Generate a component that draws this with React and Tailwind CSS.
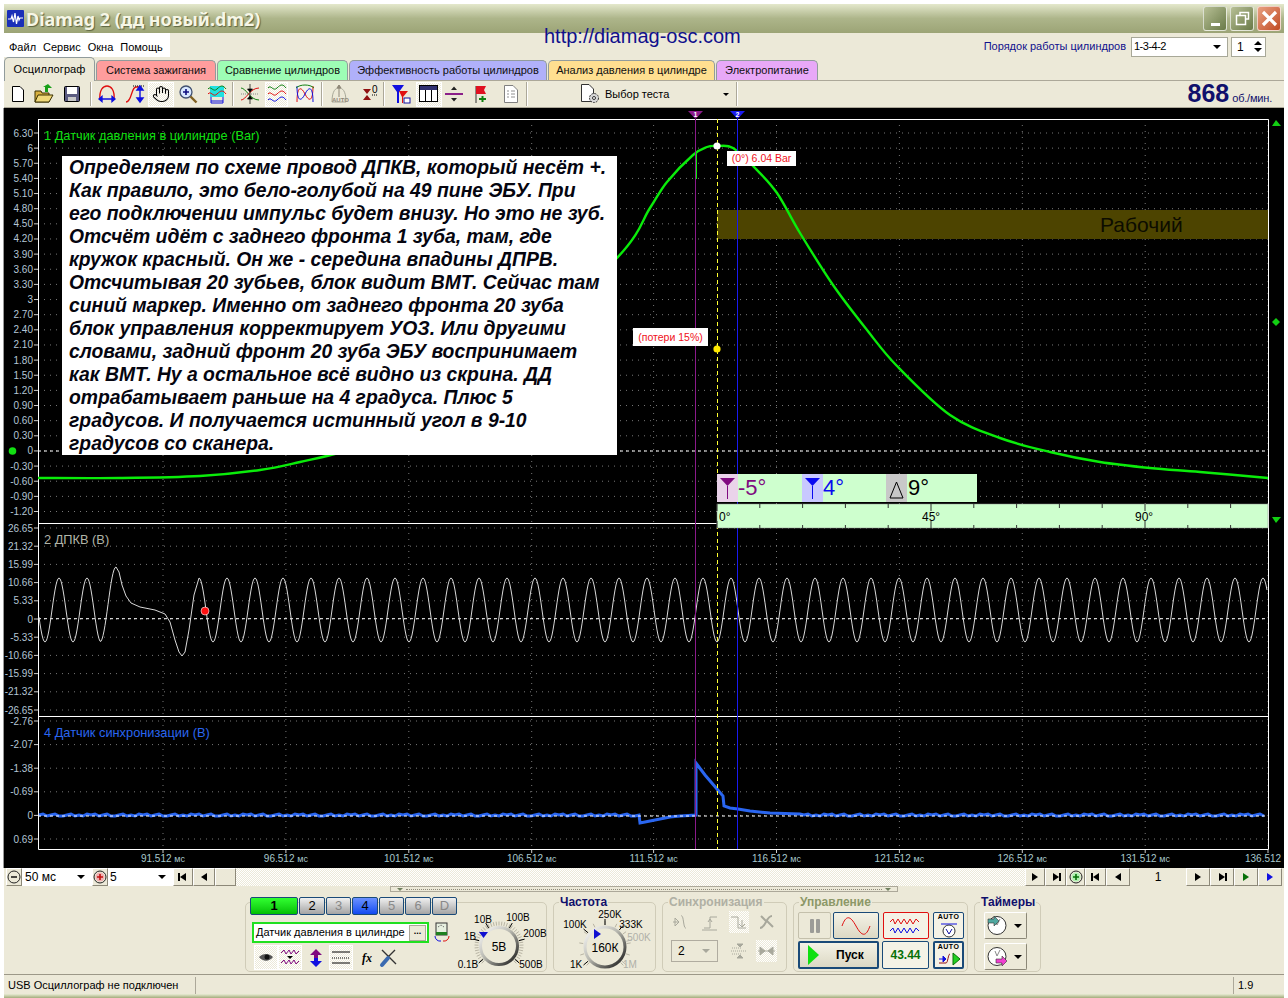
import React from 'react';
import { Hand } from 'lucide-react';

const NOTE_LINES = [
  'Определяем по схеме провод ДПКВ, который несёт +.',
  'Как правило, это бело-голубой на 49 пине ЭБУ. При',
  'его подключении импульс будет внизу. Но это не зуб.',
  'Отсчёт идёт с заднего фронта 1 зуба, там, где',
  'кружок красный. Он же - середина впадины ДПРВ.',
  'Отсчитывая 20 зубьев, блок видит ВМТ. Сейчас там',
  'синий маркер. Именно от заднего фронта 20 зуба',
  'блок управления корректирует УОЗ. Или другими',
  'словами, задний фронт 20 зуба ЭБУ воспринимает',
  'как ВМТ. Ну а остальное всё видно из скрина. ДД',
  'отрабатывает раньше на 4 градуса. Плюс 5',
  'градусов. И получается истинный угол в 9-10',
  'градусов со сканера.',
];

const TIME_X = [163, 285.9, 408.8, 531.7, 653.6, 776.5, 899.4, 1022.3, 1145.2, 1268];
const TIME_LABELS = ['91.512', '96.512', '101.512', '106.512', '111.512', '116.512', '121.512', '126.512', '131.512', '136.512'];

const P1 = ['6.30', '6', '5.70', '5.40', '5.10', '4.80', '4.50', '4.20', '3.90', '3.60', '3.30', '3', '2.70', '2.40', '2.10', '1.80', '1.50', '1.20', '0.90', '0.60', '0.30', '0', '-0.30', '-0.60', '-0.90', '-1.20']
  .map((t, i) => ({ t, y: 133 + i * 15.14 }));
const P2 = ['26.65', '21.32', '15.99', '10.66', '5.33', '0', '-5.33', '-10.66', '-15.99', '-21.32', '-26.65']
  .map((t, i) => ({ t, y: 528 + i * 18.2 }));
const P3 = ['-2.76', '-2.07', '-1.38', '-0.69', '0', '0.69']
  .map((t, i) => ({ t, y: 721 + i * 23.6 }));

const smooth = (pts) => {
  let d = `M${pts[0][0]} ${pts[0][1]}`;
  for (let i = 0; i < pts.length - 1; i++) {
    const p0 = pts[i - 1] || pts[i];
    const p1 = pts[i];
    const p2 = pts[i + 1];
    const p3 = pts[i + 2] || p2;
    d += ` C${p1[0] + (p2[0] - p0[0]) / 6} ${p1[1] + (p2[1] - p0[1]) / 6} ${p2[0] - (p3[0] - p1[0]) / 6} ${p2[1] - (p3[1] - p1[1]) / 6} ${p2[0]} ${p2[1]}`;
  }
  return d;
};

const pressure = smooth([
  [38, 478], [120, 478], [200, 476], [260, 470], [300, 462], [345, 451], [400, 430], [500, 370], [617, 258],
  [650, 208], [667, 182], [693, 155], [707, 147], [717, 146], [733, 148], [755, 168], [777, 193], [800, 233],
  [833, 285], [867, 330], [897, 366], [950, 415], [1000, 438], [1050, 452], [1100, 462], [1150, 468], [1200, 472], [1268, 478],
]);

const crankPath = () => {
  const pts = [];
  for (let x = 39; x <= 100; x++) pts.push([x, 610 - 32 * Math.cos((2 * Math.PI * (x - 59)) / 28)]);
  for (let x = 101; x <= 116; x++) pts.push([x, 604.5 - 37.5 * Math.cos((Math.PI * (x - 116)) / 16)]);
  const tail = [[119, 572], [122, 585], [126, 596], [131, 603], [140, 607], [155, 610], [165, 614], [170, 622], [175, 640], [179, 652], [182, 656], [185, 652], [189, 630], [194, 595]];
  pts.push(...tail);
  for (let x = 199; x <= 1267; x++) pts.push([x, 610 - 32 * Math.cos((2 * Math.PI * (x - 199)) / 28)]);
  return pts.map((p) => p.join(',')).join(' ');
};

const syncPath = () => {
  const jitter = [0, -1, 1, 0, -1, 1, 1, 0, -1, 1, 0, 1, -1];
  const pts = [];
  let n = 0;
  for (let x = 39; x < 639; x += 4) pts.push([x, 815 + jitter[n++ % 13]]);
  pts.push([639, 815], [640, 823], [645, 822], [650, 821], [660, 819], [670, 817], [680, 816], [696, 815], [696, 763], [705, 775], [717, 789], [723, 796], [724, 806], [730, 808], [738, 809], [750, 811], [770, 813], [800, 814]);
  for (let x = 804; x < 1268; x += 4) pts.push([x, 815 + jitter[n++ % 13]]);
  return pts.map((p) => p.join(',')).join(' ');
};

const Scope = () => (
  <div className="relative w-[1280px] h-[760px] bg-black shrink-0 shadow-[-1px_0_0_#999]">
    <svg width="1280" height="760" viewBox="4 108 1280 760" className="block" fontFamily="'Liberation Sans', sans-serif">
      {/* grid */}
      {[...P1, ...P2, ...P3].map((r, i) => (
        <line key={i} x1="38" x2="1268" y1={r.y} y2={r.y} stroke="#777" strokeDasharray="1 5" />
      ))}
      {TIME_X.map((x) => (
        <line key={x} x1={x} x2={x} y1="119" y2="849" stroke="#777" strokeDasharray="1 5" />
      ))}
      {/* zero lines */}
      <line x1="38" x2="1268" y1="451" y2="451" stroke="#fff" strokeDasharray="3 3" />
      <line x1="38" x2="1268" y1="618.7" y2="618.7" stroke="#fff" strokeDasharray="3 3" />
      {/* frame */}
      <path d="M38 119.5H1268.5V849.5H38.5V119.5M38 523.5H1268M38 716.5H1268" fill="none" stroke="#fff" />
      {/* axis */}
      {[...P1, ...P2, ...P3].map((r) => (
        <g key={r.t + r.y}>
          <line x1="34" x2="38" y1={r.y} y2={r.y} stroke="#ccc" />
          <text x="33" y={r.y + 3.5} textAnchor="end" fontSize="10" fill="#b4c6d6">{r.t}</text>
        </g>
      ))}
      {TIME_X.map((x, i) => (
        <g key={x}>
          <line x1={x} x2={x} y1="850" y2="853" stroke="#ccc" />
          <text x={i === 9 ? 1245 : x} y="862" textAnchor={i === 9 ? 'start' : 'middle'} fontSize="10" fill="#a8c8cc">{TIME_LABELS[i]} <tspan fontSize="9">мс</tspan></text>
        </g>
      ))}
      {/* working band */}
      <rect x="717" y="210" width="551" height="29" fill="#4d4400" />
      <text x="1100" y="232" fontSize="21" fill="#0c0c00">Рабочий</text>
      {/* traces */}
      <path d={pressure} fill="none" stroke="#0aec0a" strokeWidth="2.4" />
      <path d="M696 152V179" stroke="#0aec0a" strokeWidth="2" />
      <polyline points={crankPath()} fill="none" stroke="#d8d8d8" />
      <polyline points={syncPath()} fill="none" stroke="#2a66f0" strokeWidth="3" />
      <line x1="38" x2="1268" y1="816" y2="816" stroke="#fff" strokeDasharray="3 3" />
      {/* cursors */}
      <line x1="695.5" x2="695.5" y1="119" y2="849" stroke="#8a1a8a" />
      <line x1="737.5" x2="737.5" y1="119" y2="849" stroke="#1a1af0" />
      <line x1="717.5" x2="717.5" y1="119" y2="849" stroke="#ffff30" strokeDasharray="4 3" />
      <path d="M688 111H703L695.5 119Z" fill="#8a1a8a" />
      <text x="695.5" y="117" textAnchor="middle" fontSize="7" fontWeight="700" fill="#fff">1</text>
      <path d="M730 111H745L737.5 119Z" fill="#1a1af0" />
      <text x="737.5" y="117" textAnchor="middle" fontSize="7" fontWeight="700" fill="#fff">2</text>
      {/* dots */}
      <circle cx="717" cy="146" r="3.6" fill="#fff" />
      <circle cx="717" cy="349" r="3.6" fill="#ffe800" />
      <circle cx="205" cy="611" r="4" fill="#ff1010" stroke="#fff" strokeWidth="0.6" />
      <circle cx="12.5" cy="451" r="3.8" fill="#12e012" />
      {/* side arrows */}
      <path d="M1272 126L1276 120L1281 126Z" fill="#12d012" />
      <path d="M1276 318L1280 322L1276 326L1272 322Z" fill="#12d012" />
      <path d="M1272 517H1281L1276 523Z" fill="#12d012" />
      {/* degree bar */}
      <rect x="717" y="474" width="260" height="28" fill="#ceffce" />
      <rect x="717" y="474" width="21" height="28" fill="#ead3ea" />
      <path d="M720 478H735L727.5 486Z M727 486H728V499H727Z" fill="#800a80" />
      <text x="738" y="495" fontSize="22" fill="#800a80">-5°</text>
      <rect x="802" y="474" width="21" height="28" fill="#c8c8ff" />
      <path d="M805 478H820L812.5 486Z M812 486H813V499H812Z" fill="#0a0af0" />
      <text x="823" y="495" fontSize="22" fill="#0a0af0">4°</text>
      <rect x="886" y="474" width="21" height="28" fill="#c8c8c8" />
      <path d="M890 498L896.5 482L903 498Z" fill="none" stroke="#000" />
      <text x="908" y="495" fontSize="22" fill="#000">9°</text>
      <rect x="717" y="504" width="551" height="24" fill="#ceffce" stroke="#888" strokeWidth="0.5" />
      {Array.from({ length: 13 }, (_, i) => 717 + i * 42.8).map((x, i) => (
        <g key={x}>
          <line x1={x} x2={x} y1="504" y2={i % 5 === 0 ? 511 : 508} stroke="#333" />
          <line x1={x} x2={x} y1={i % 5 === 0 ? 521 : 525} y2="528" stroke="#333" />
        </g>
      ))}
      <text x="719" y="521" fontSize="12" fill="#000">0°</text>
      <text x="922" y="521" fontSize="12" fill="#000">45°</text>
      <text x="1135" y="521" fontSize="12" fill="#000">90°</text>
      {/* channel titles */}
      <text x="44" y="140" fontSize="12.8" fill="#10e010">1 Датчик давления в цилиндре (Bar)</text>
      <text x="44" y="544" fontSize="12.8" fill="#b0b4a8">2 ДПКВ (В)</text>
      <text x="44" y="737" fontSize="12.8" fill="#2a66f0">4 Датчик синхронизации (В)</text>
    </svg>
    {/* value labels over the chart */}
    <div className="absolute left-[723px] top-[43px] h-[15px] w-[69px] bg-white text-[10.5px] leading-[15px] text-center text-[#f01020] whitespace-nowrap">(0°) 6.04 Bar</div>
    <div className="absolute left-[629px] top-[220px] h-[18px] w-[75px] bg-white text-[10.5px] leading-[18px] text-center text-[#f01020] whitespace-nowrap">(потери 15%)</div>
    {/* note pasted over the picture */}
    <div className="absolute left-[58px] top-[48px] w-[555px] h-[299px] bg-white pl-[7px] text-[19.35px] leading-[23px] font-bold italic text-[#05050f] whitespace-nowrap">
      {NOTE_LINES.map((l) => <div key={l}>{l}</div>)}
    </div>
  </div>
);

const TitleBar = () => (
  <div className="h-[29px] shrink-0 flex items-center pl-[3px] pr-[3px] bg-gradient-to-b from-[#e4e8cc] via-[#adb58a] to-[#9ca476]">
    <svg width="17" height="17" viewBox="0 0 17 17" className="shrink-0">
      <rect width="17" height="17" rx="1" fill="#1a2fb8" />
      <path d="M1 9H4L5 6L6.500 12L8 3L9.500 14L11 6L12 10L13 8H16" fill="none" stroke="#fff" strokeWidth="1.2" />
    </svg>
    <span className="ml-[2px] text-[18px] leading-none font-bold text-[#f6f6e6] whitespace-nowrap [font-family:'Noto_Sans',sans-serif] [text-shadow:1px_1px_1px_#5c6440]">Diamag 2 (дд новый.dm2)</span>
    <div className="ml-auto flex gap-[3px]">
      <div className="w-[24px] h-[25px] rounded-[3px] border border-white/70 bg-gradient-to-br from-[#b8c096] to-[#6a7a48] flex items-end justify-center pb-[4px]">
        <div className="w-[9px] h-[3px] bg-white" />
      </div>
      <div className="w-[24px] h-[25px] rounded-[3px] border border-white/70 bg-gradient-to-br from-[#b8c096] to-[#6a7a48] flex items-center justify-center">
        <svg width="15" height="15" viewBox="0 0 15 15"><path d="M5 4V1.500H13.500V8H10.500M1.500 4.500H10.500V13.500H1.500Z" fill="none" stroke="#fff" strokeWidth="1.5" /></svg>
      </div>
      <div className="w-[24px] h-[25px] rounded-[3px] border border-white/70 bg-gradient-to-br from-[#e8a080] to-[#c04a20] flex items-center justify-center">
        <svg width="17" height="17" viewBox="0 0 17 17"><path d="M2 2L15 15M15 2L2 15" stroke="#fff" strokeWidth="3.2" /></svg>
      </div>
    </div>
  </div>
);

const MenuRow = () => (
  <div className="relative h-[25px] shrink-0 flex bg-[#ece9d8]">
    <div className="w-[166px] h-[24px] bg-white flex items-center gap-[7px] pl-[5px] pt-[4px] text-[11px] text-black">
      <span>Файл</span><span>Сервис</span><span>Окна</span><span>Помощь</span>
    </div>
    <div className="absolute left-[540px] -top-[8px] text-[20px] leading-[23px] text-[#10108c] whitespace-nowrap">http://diamag-osc.com</div>
    <div className="ml-auto flex items-center pt-[2px] pr-[18px]">
      <span className="text-[11px] text-[#10108c] mr-[5px]">Порядок работы цилиндров</span>
      <div className="w-[97px] h-[20px] bg-white border border-[#a8a898] flex items-center pl-[2px] text-[11px] tracking-[-0.5px]">
        1-3-4-2
        <span className="ml-auto mr-[6px] w-0 h-0 border-x-[4px] border-x-transparent border-t-[4px] border-t-black" />
      </div>
      <div className="ml-[3px] w-[35px] h-[20px] bg-white border border-[#a8a898] flex items-center pl-[5px] text-[12px]">
        1
        <span className="ml-auto mr-[3px] flex flex-col gap-[3px]">
          <span className="w-0 h-0 border-x-[4px] border-x-transparent border-b-[4px] border-b-black" />
          <span className="w-0 h-0 border-x-[4px] border-x-transparent border-t-[4px] border-t-black" />
        </span>
      </div>
    </div>
  </div>
);

const Tabs = () => {
  const tabs = [
    ['Система зажигания', 'w-[120px] bg-[#ff9d9d]'],
    ['Сравнение цилиндров', 'w-[131px] bg-[#9dfdb5]'],
    ['Эффективность работы цилиндров', 'w-[198px] bg-[#b0b0fa]'],
    ['Анализ давления в цилиндре', 'w-[167px] bg-[#ffdf90]'],
    ['Электропитание', 'w-[102px] bg-[#e8a8f8]'],
  ];
  return (
    <div className="h-[23px] shrink-0 flex items-end gap-[1px] bg-[#ece9d8] border-b border-[#aca899]">
      <div className="relative -mb-px w-[91px] h-[24px] rounded-t-[5px] border border-b-0 border-[#919b9c] bg-[#ece9d8] flex items-center justify-center text-[11px] tracking-[0.1px]">Осциллограф</div>
      {tabs.map(([t, c]) => (
        <div key={t} className={`${c} h-[20px] rounded-t-[5px] border border-b-0 border-[#919b9c] flex items-center justify-center text-[11px] text-[#101010] whitespace-nowrap`}>{t}</div>
      ))}
    </div>
  );
};

const Cell = ({ w, on, light, children }) => (
  <div
    className={`h-[25px] shrink-0 flex items-center justify-center ${on ? 'border border-white bg-[repeating-conic-gradient(#ece9d8_0_25%,#fff_0_50%)] [background-size:2px_2px]' : ''} ${light ? 'bg-[#f4f3ea]' : ''}`}
    style={{ width: w }}
  >
    {children}
  </div>
);

const Sep = () => <div className="w-[2px] h-[24px] shrink-0 bg-[#aca899] border-r border-white" />;

const Ico = ({ children, w = 20, h = 20 }) => (
  <svg width={w} height={h} viewBox={`0 0 ${w} ${h}`} fill="none">{children}</svg>
);

const Toolbar = () => (
  <div className="h-[27px] shrink-0 flex items-center pl-[2px] bg-[#ece9d8] border-b border-[#aca899]">
    <Cell w={24}><Ico w={12} h={16}><path d="M.5.500H8L11.500 4V15.500H.5Z" fill="#fff" stroke="#000" /></Ico></Cell>
    <Cell w={28}><Ico><path d="M1 18V7H7L8 9H15V18Z" fill="#d8b040" stroke="#3a3000" /><path d="M1 18L4 11H19L15 18Z" fill="#f0d878" stroke="#3a3000" /><path d="M11 8V3H9L14 0L18 4H14V8Z" fill="#18a018" /></Ico></Cell>
    <Cell w={28}><Ico w={16} h={16}><rect x=".5" y=".5" width="15" height="15" rx="1" fill="#5a5a80" stroke="#000" /><rect x="3" y="1" width="10" height="7" fill="#fff" /><rect x="4" y="11" width="8" height="4" fill="#c8c8c8" /></Ico></Cell>
    <div className="w-[4px]" /><Sep />
    <Cell w={30}><Ico><path d="M3 16C2 6 6 2 10 2S18 6 17 16" stroke="#e01010" strokeWidth="1.4" /><path d="M2 15H18M2 15L5 12.500V17.500ZM18 15L15 12.500V17.500Z" stroke="#1010e0" strokeWidth="1.3" fill="#1010e0" /></Ico></Cell>
    <Cell w={25}><Ico><path d="M1 18C7 18 6 3 11 3H14" stroke="#e01010" strokeWidth="1.3" /><path d="M8 2H19" stroke="#000" strokeDasharray="1 1" /><path d="M15 3V17M15 2L12 6H18ZM15 18L12 14H18Z" stroke="#1010e0" strokeWidth="1.4" fill="#1010e0" /></Ico></Cell>
    <div className="w-[1px]" />
    <Cell w={26} on><Hand size={18} strokeWidth={1.4} color="#000" /></Cell>
    <Cell w={27}><Ico><circle cx="8" cy="8" r="6" fill="#d8e8ff" stroke="#405070" strokeWidth="1.3" /><path d="M5 8H11M8 5V11" stroke="#101080" strokeWidth="1.6" /><path d="M12.500 12.500L18.500 18.500" stroke="#806020" strokeWidth="2.4" /></Ico></Cell>
    <Cell w={31}><Ico><rect x="3" y="2" width="14" height="11" fill="#20e0e0" /><path d="M1 5C4 1 6 9 10 5S16 1 19 5" stroke="#108010" /><path d="M1 10C4 6 6 14 10 10S16 6 19 10" stroke="#e01010" /><path d="M4 13V19H16V13M4 17H16" stroke="#1010e0" /></Ico></Cell>
    <Sep />
    <Cell w={31}><Ico><path d="M1 4C6 4 10 16 19 16" stroke="#108010" /><path d="M1 16C6 16 10 4 19 4" stroke="#e01010" /><path d="M1 10H19" stroke="#888" strokeDasharray="1 1" /><path d="M10 0V20M10 8L7.500 5H12.500ZM10 12L7.500 15H12.500Z" stroke="#000" fill="#000" strokeWidth=".7" /></Ico></Cell>
    <Cell w={23} on><Ico><path d="M1 4C4 0 6 8 10 4S16 0 19 4" stroke="#108010" /><path d="M1 10C4 6 6 14 10 10S16 6 19 10" stroke="#e01010" /><path d="M1 16C4 12 6 20 10 16S16 12 19 16" stroke="#1010e0" /></Ico></Cell>
    <Cell w={33} light><Ico><path d="M2 18C2 2 6 2 10 10S18 18 18 2" stroke="#e01010" /><path d="M2 2C2 18 6 18 10 10S18 2 18 18" stroke="#1010e0" /><path d="M1 4C5 0 15 0 19 4" stroke="#108010" /></Ico></Cell>
    <Sep />
    <Cell w={32}><Ico><path d="M3 18C3 6 7 4 10 4S17 6 17 18Z" stroke="#a8a898" fill="#ece9d8" /><path d="M10 1V13M10 1L8 4H12Z" stroke="#908878" fill="#908878" /><text x="3" y="18" fontSize="6" fontWeight="700" fill="#908878" fontFamily="'Liberation Sans', sans-serif">AUTO</text></Ico></Cell>
    <Cell w={28}><Ico><path d="M4 5H12L8 10ZM4 16H12L8 11Z" fill="#901010" /><text x="13" y="9" fontSize="10" fill="#000" fontFamily="'Liberation Sans', sans-serif">0</text><path d="M13 11H19" stroke="#000" strokeDasharray="1 1" /></Ico></Cell>
    <Sep />
    <Cell w={31}><Ico><path d="M1 1H13L8 8V19H6V8Z" fill="#1010e0" /><path d="M8 7H17L12 13V19H11V13Z" fill="#e01010" /><rect x="13" y="14" width="6" height="5" fill="#fff" stroke="#1010a0" /></Ico></Cell>
    <Cell w={26} on><Ico><rect x=".5" y="1.500" width="18" height="16" fill="#fff" stroke="#000" /><rect x="1" y="2" width="17" height="4" fill="#303070" /><path d="M6.500 6V17M12.500 6V17" stroke="#000" /></Ico></Cell>
    <Cell w={24}><Ico><path d="M1 10H19" stroke="#800a80" strokeWidth="1.8" /><path d="M7 6H13L10 2.500ZM7 14H13L10 17.500Z" fill="#222" /></Ico></Cell>
    <Cell w={30}><Ico w={14}><path d="M2 19V2" stroke="#333" /><path d="M2 2H12L10 6L12 10H2Z" fill="#e01020" /><path d="M5 15H12M8.500 12V18" stroke="#108010" strokeWidth="2" /></Ico></Cell>
    <Cell w={30}><Ico w={14} h={18}><path d="M.5.500H9L13.500 5V17.500H.5Z" fill="#fff" stroke="#808080" /><path d="M3 6H5M3 9H5M3 12H5M7 6H11M7 9H11M7 12H11" stroke="#909090" /></Ico></Cell>
    <Sep />
    <div className="w-[208px] flex items-center pl-[52px] pr-[7px] text-[11px]">
      <Ico w={21}><path d="M1.500.5H9L13.500 5V17.500H1.500Z" fill="#fff" stroke="#333" /><circle cx="14" cy="14" r="4.500" fill="#d8d8d8" stroke="#333" strokeDasharray="2 1" /><circle cx="14" cy="14" r="1.500" fill="#fff" stroke="#333" /></Ico>
      <span className="ml-[4px] mt-[1px] whitespace-nowrap">Выбор теста</span>
      <span className="ml-auto w-0 h-0 border-x-[3px] border-x-transparent border-t-[3px] border-t-black" />
    </div>
    <Sep />
    <div className="ml-auto flex items-baseline pr-[12px] text-[#10106c]">
      <span className="text-[25px] leading-none font-bold">868</span>
      <span className="ml-[3px] text-[11px] tracking-[-0.2px]">об./мин.</span>
    </div>
  </div>
);

const Btn = ({ w, children, className = '' }) => (
  <div
    className={`h-[18px] shrink-0 flex items-center justify-center bg-[#ece9d8] border border-white border-r-[#8c8878] border-b-[#8c8878] ${className}`}
    style={{ width: w }}
  >
    {children}
  </div>
);

const Tri = ({ dir = 'r', c = 'black', bar }) => (
  <svg width="10" height="10" viewBox="0 0 10 10">
    {dir === 'r' ? <path d="M2 1L8 5L2 9Z" fill={c} /> : <path d="M8 1L2 5L8 9Z" fill={c} />}
    {bar === 'l' && <rect x="0" y="1" width="2" height="8" fill={c} />}
    {bar === 'r' && <rect x="8" y="1" width="2" height="8" fill={c} />}
  </svg>
);

const RoundBtn = ({ fill, glyph }) => (
  <svg width="14" height="14" viewBox="0 0 14 14">
    <circle cx="7" cy="7" r="6" fill="none" stroke="#222" />
    <circle cx="7" cy="7" r="4.500" fill={fill} />
    {glyph}
  </svg>
);

const ScrollRow = () => (
  <div className="h-[18px] shrink-0 flex bg-[#ece9d8] pr-[2px]">
    <Btn w={16} className="ml-[2px]"><RoundBtn fill="#ece9d8" glyph={<path d="M4 7H10" stroke="#000" strokeWidth="1.4" />} /></Btn>
    <div className="w-[70px] h-[18px] bg-white flex items-center pl-[3px] text-[12px]">
      50 мс<span className="ml-auto mr-[7px] w-0 h-0 border-x-[4px] border-x-transparent border-t-[4px] border-t-black" />
    </div>
    <Btn w={16} ><RoundBtn fill="#f0b0b0" glyph={<path d="M4 7H10M7 4V10" stroke="#c01010" strokeWidth="1.6" />} /></Btn>
    <div className="w-[65px] h-[18px] bg-white flex items-center pl-[2px] text-[12px]">
      5<span className="ml-auto mr-[7px] w-0 h-0 border-x-[4px] border-x-transparent border-t-[4px] border-t-black" />
    </div>
    <Btn w={20}><Tri dir="l" bar="l" /></Btn>
    <Btn w={22}><Tri dir="l" /></Btn>
    <Btn w={21} />
    <div className="flex-1 bg-[repeating-conic-gradient(#ece9d8_0_25%,#fff_0_50%)] [background-size:2px_2px]" />
    <Btn w={20}><Tri /></Btn>
    <Btn w={21}><Tri bar="r" /></Btn>
    <Btn w={19}><RoundBtn fill="#b0f0b0" glyph={<path d="M4 7H10M7 4V10" stroke="#087008" strokeWidth="1.6" />} /></Btn>
    <Btn w={21}><Tri dir="l" bar="l" /></Btn>
    <Btn w={24}><Tri dir="l" /></Btn>
    <div className="w-[56px] h-[18px] flex items-center justify-center text-[12px]">1</div>
    <Btn w={24}><Tri /></Btn>
    <Btn w={24}><Tri bar="r" /></Btn>
    <Btn w={24}><Tri c="#087008" /></Btn>
    <Btn w={24}><Tri c="#1010e0" /></Btn>
  </div>
);

const polar = (cx, cy, r, deg) => {
  const a = ((deg - 90) * Math.PI) / 180;
  return [cx + r * Math.cos(a), cy + r * Math.sin(a)];
};

const Knob = ({ w, h, cx, cy, r, value, labels, marker, step = 6.75 }) => (
  <svg width={w} height={h} viewBox={`0 0 ${w} ${h}`} fontFamily="'Liberation Sans', sans-serif" className="shrink-0">
    <defs>
      <linearGradient id={`kn${value}`} x1="0" y1="0" x2="1" y2="1">
        <stop offset="0" stopColor="#fff" />
        <stop offset="0.45" stopColor="#b8b8b0" />
        <stop offset="1" stopColor="#111" />
      </linearGradient>
    </defs>
    {Array.from({ length: Math.floor(270 / step) + 1 }, (_, i) => -135 + i * step).map((d) => {
      const a = polar(cx, cy, r + 2, d);
      const b = polar(cx, cy, r + 6, d);
      return <line key={d} x1={a[0]} y1={a[1]} x2={b[0]} y2={b[1]} stroke="#b8b4a4" />;
    })}
    {labels.map((l) => {
      const a = polar(cx, cy, r + 2, l.deg);
      const b = polar(cx, cy, r + 8, l.deg);
      return (
        <g key={l.t}>
          <line x1={a[0]} y1={a[1]} x2={b[0]} y2={b[1]} stroke={l.off ? '#b8b8b0' : '#000'} />
          <text x={l.x} y={l.y} fontSize="10" textAnchor="middle" fill={l.off ? '#b0b0a8' : '#000'}>{l.t}</text>
        </g>
      );
    })}
    <circle cx={cx} cy={cy} r={r} fill="#ece9d8" stroke={`url(#kn${value})`} strokeWidth="3" />
    <path d={marker} fill="#1010d0" />
    <text x={cx} y={cy + 4.5} fontSize="12" textAnchor="middle" fill="#000">{value}</text>
  </svg>
);

const Group = ({ title, titleColor, className, children }) => (
  <div className={`relative h-[70px] shrink-0 rounded-[5px] border border-[#d0ccb8] ${className}`}>
    {title && (
      <div className={`absolute left-[5px] -top-[7px] px-[1px] bg-[#ece9d8] text-[12px] leading-[13px] font-bold whitespace-nowrap ${titleColor}`}>{title}</div>
    )}
    {children}
  </div>
);

const Chan = ({ w, children, c }) => (
  <div
    className={`h-[18px] shrink-0 rounded-[2px] border border-[#1a4a78] flex items-center justify-center text-[13px] ${c}`}
    style={{ width: w }}
  >
    {children}
  </div>
);

const GRAY = 'bg-gradient-to-b from-[#f0f0f0] to-[#a4a4a4]';
const Gi = ({ children, on }) => (
  <div className={`w-[21px] h-[22px] flex items-center justify-center ${on ? 'bg-[repeating-conic-gradient(#ece9d8_0_25%,#fff_0_50%)] [background-size:2px_2px]' : ''}`}>
    <svg width="19" height="19" viewBox="0 0 19 19" fill="none" stroke="#a8a89c">{children}</svg>
  </div>
);

const Controls = () => (
  <div className="h-[89px] shrink-0 bg-[#ece9d8] flex flex-col border-b border-[#9c9888]">
    <div className="ml-[386px] w-[508px] h-[6px] shrink-0 border border-[#aca899] flex items-center">
      <span className="ml-[6px] w-0 h-0 border-x-[3px] border-x-transparent border-t-[3px] border-t-[#708060]" />
      <div className="flex-1 mx-[3px] border-t border-dotted border-[#8c8878]" />
      <span className="mr-[6px] w-0 h-0 border-x-[3px] border-x-transparent border-t-[3px] border-t-[#708060]" />
    </div>
    <div className="ml-[241px] mt-[10px] flex gap-[6px]">
      {/* channels */}
      <Group className="w-[302px] flex">
        <div className="w-[205px] shrink-0 pl-[4px] -mt-[6px] flex flex-col">
          <div className="flex gap-[1px] w-[215px]">
            <Chan w={48} c="bg-gradient-to-b from-[#30ff30] to-[#00c000] font-bold">1</Chan>
            <Chan w={26} c={GRAY}>2</Chan>
            <Chan w={25} c={`${GRAY} text-[#888]`}>3</Chan>
            <Chan w={26} c="bg-gradient-to-b from-[#6a90ff] to-[#1048f0]">4</Chan>
            <Chan w={25} c={`${GRAY} text-[#888]`}>5</Chan>
            <Chan w={26} c={`${GRAY} text-[#888]`}>6</Chan>
            <Chan w={25} c={`${GRAY} text-[#888]`}>D</Chan>
          </div>
          <div className="mt-[7px] flex items-center">
            <div className="ml-[2px] w-[177px] h-[21px] bg-white border-2 border-[#20e020] flex items-center pl-[2px] text-[11px] whitespace-nowrap">
              Датчик давления в цилиндре
              <span className="ml-auto w-[17px] h-[16px] mr-px bg-[#ece9d8] border border-[#aca899] flex items-center justify-center text-[9px] font-bold leading-none pb-[3px]">...</span>
            </div>
            <div className="ml-[4px]">
              <Ico w={18} h={21}>
                <rect x="3" y="1" width="11" height="12" fill="#e8f0e0" stroke="#333" />
                <rect x="3" y="10" width="11" height="3" fill="#208020" />
                <path d="M5 5L8 3L11 5" stroke="#555" strokeDasharray="1 1" />
                <path d="M2 14A5 5 0 0 0 8 19" stroke="#1010e0" />
                <path d="M16 14A5 5 0 0 1 10 19" stroke="#e01010" />
              </Ico>
            </div>
          </div>
          <div className="mt-[2px] ml-[4px] flex items-center">
            <Cell w={24} on><Ico w={16} h={12}><path d="M1 5C5 1 11 1 15 5C11 10 5 10 1 5Z" fill="#555" /><circle cx="9" cy="5" r="2.500" fill="#111" /></Ico></Cell>
            <Cell w={24} on><Ico><path d="M1 5L4 2L6 6L9 2L11 6L14 2L16 6L19 3M1 15L4 12L6 16L9 12L11 16L14 12L16 16L19 13" stroke="#800a80" /><path d="M7 8H13L10 11Z" fill="#000" /></Ico></Cell>
            <div className="w-[27px] flex justify-center"><Ico w={16}><path d="M8 1L14 7H10V10H6V7H2Z" fill="#800a80" /><path d="M8 19L14 13H10V10H6V13H2Z" fill="#1010e0" /></Ico></div>
            <Cell w={24} on><Ico><path d="M1 4H19M1 15H19" stroke="#000" /><path d="M1 10H19" stroke="#000" strokeDasharray="1 1" /></Ico></Cell>
            <div className="ml-[5px] w-[18px] text-center text-[12px] font-bold italic [font-family:'Liberation_Serif',serif]">fx</div>
            <div className="ml-[3px]"><Ico><path d="M3 2L17 16M16 2L9 9" stroke="#333" strokeWidth="1.4" /><path d="M9 10L3 17" stroke="#3a6ab0" strokeWidth="4" strokeLinecap="round" /></Ico></div>
          </div>
        </div>
        <Knob w={96} h={68} cx={48} cy={43} r={18.5} value="5В"
          marker="M28 29H37L32.500 35Z"
          labels={[
            { t: '10В', deg: -30, x: 32, y: 19.5 },
            { t: '100В', deg: 30, x: 67, y: 18 },
            { t: '200В', deg: 75, x: 84, y: 34 },
            { t: '1В', deg: -75, x: 19, y: 37 },
            { t: '0.1В', deg: -130, x: 17, y: 65 },
            { t: '500В', deg: 130, x: 80, y: 65 },
          ]} />
      </Group>
      {/* frequency */}
      <Group title="Частота" titleColor="text-[#10106c]" className="w-[103px]">
        <Knob w={101} h={68} cx={51} cy={44} r={20} value="160К" step={27}
          marker="M40 26V36L47 31Z"
          labels={[
            { t: '250K', deg: 0, x: 56, y: 14.5 },
            { t: '333K', deg: 40, x: 77, y: 24.5 },
            { t: '500K', deg: 75, x: 85, y: 37.5, off: true },
            { t: '100K', deg: -50, x: 21, y: 24.5 },
            { t: '1K', deg: -130, x: 22, y: 64.5 },
            { t: '1M', deg: 130, x: 76, y: 64.5, off: true },
          ]} />
      </Group>
      {/* sync */}
      <Group title="Синхронизация" titleColor="text-[#b0b0a4]" className="w-[125px] px-[8px] pt-[8px]">
        <div className="flex items-center gap-[8px]">
          <Gi><path d="M1 9H6M9 3C12 1 11 16 14 15M3 5L7 9L3 13Z" /></Gi>
          <Gi><path d="M3 15H9V4H16M7 9L9 6L11 9M1 17H16" /></Gi>
          <Gi on><path d="M2 4H9V15H17M13 7V14M10 11L13 14L16 11" /></Gi>
          <Gi><path d="M2 15C8 15 8 3 14 3M3 3L9 9M9 8L15 14" strokeWidth="2" /></Gi>
        </div>
        <div className="flex items-center mt-[7px]">
          <div className="w-[47px] h-[22px] border border-[#b0aca0] flex items-center pl-[6px] text-[12px]">
            2<span className="ml-auto mr-[7px] w-0 h-0 border-x-[4px] border-x-transparent border-t-[4px] border-t-[#a8a89c]" />
          </div>
          <div className="ml-[11px]"><Gi><path d="M1 9H17M2 6H12M2 12H12" strokeDasharray="1 1" /><path d="M10 5L13 2H7ZM10 13L13 16H7Z" fill="#a8a89c" /></Gi></div>
          <div className="ml-[6px]"><Gi on><path d="M1 9H18" /><path d="M8 9L3 5V13ZM11 9L16 5V13Z" fill="#a8a89c" /></Gi></div>
        </div>
      </Group>
      {/* control */}
      <Group title="Управление" titleColor="text-[#8c9868]" className="w-[175px] pl-[4px] pt-[9px]">
        <div className="flex gap-[2px] h-[27px]">
          <div className="w-[33px] rounded-[2px] border border-[#c4c0ac] flex items-center justify-center gap-[2px]">
            <span className="w-[4px] h-[14px] rounded-[1px] bg-[#9c9c98]" />
            <span className="w-[4px] h-[14px] rounded-[1px] bg-[#9c9c98]" />
          </div>
          <div className="w-[46px] rounded-[2px] border border-[#1a4a78] bg-gradient-to-b from-[#f4f2e6] to-[#dcd8c4] flex items-center justify-center">
            <Ico w={30} h={22}><path d="M1 11C5 0 9 0 15 11S25 22 29 11" stroke="#e01010" /></Ico>
          </div>
          <div className="ml-[2px] w-[46px] rounded-[2px] border border-[#e01010] bg-[#f4f2e6] flex items-center justify-center">
            <Ico w={34} h={20}><path d="M1 6L4 3L6 8L9 3L12 8L15 3L18 8L21 3L24 8L27 3L30 6" stroke="#e01010" /><path d="M1 15L4 12L6 17L9 12L12 17L15 12L18 17L21 12L24 17L27 12L30 15" stroke="#1010e0" /></Ico>
          </div>
          <div className="ml-[2px] w-[31px] rounded-[2px] border border-[#1a4a78] bg-[#f4f2e6] flex flex-col items-center">
            <span className="text-[7px] font-bold leading-[8px] tracking-[0.5px]">AUTO</span>
            <Ico w={20} h={17}><circle cx="10" cy="10" r="6" fill="#fff" stroke="#333" /><path d="M7 8L10 13L13 8" stroke="#1010a0" /><path d="M2 3H18" stroke="#1010e0" /></Ico>
          </div>
        </div>
        <div className="flex gap-[2px] h-[28px] mt-[2px]">
          <div className="w-[81px] rounded-[2px] border-2 border-[#1a4a78] bg-gradient-to-b from-[#f4f2e6] to-[#dcd8c4] flex items-center pl-[8px] text-[12px] font-bold">
            <span className="w-0 h-0 border-y-[10px] border-y-transparent border-l-[11px] border-l-[#10e010]" />
            <span className="ml-[17px]">Пуск</span>
          </div>
          <div className="ml-[1px] w-[47px] rounded-[2px] border border-[#1a4a78] bg-[#f4f2e6] flex items-center justify-center text-[12px] font-bold text-[#087008]">43.44</div>
          <div className="ml-[2px] w-[31px] rounded-[2px] border-2 border-[#1a4a78] bg-[#f4f2e6] flex flex-col items-center">
            <span className="text-[7px] font-bold leading-[8px] tracking-[0.5px]">AUTO</span>
            <Ico w={24} h={16}><path d="M2 12H9C11 12 11 3 13 3" stroke="#901010" /><path d="M2 8H9M9 8L6 5V11Z" stroke="#1010e0" fill="#1010e0" /><path d="M16 2L23 8L16 14Z" fill="#20d020" stroke="#087008" /></Ico>
          </div>
        </div>
      </Group>
      {/* timers */}
      <Group title="Таймеры" titleColor="text-[#10106c]" className="w-[67px] pl-[9px] pt-[9px]">
        {[['#50a8a0', 'M1 5H7V2L12 7L7 12V9H1Z'], ['#f040d0', 'M9 14H15V11L20 16L15 21V18H9Z']].map(([c, d], i) => (
          <div key={c} className={`w-[43px] h-[27px] flex items-center pl-[2px] rounded-[2px] bg-[#ece9d8] border border-white border-r-[#8c8878] border-b-[#8c8878] ${i ? 'mt-[4px]' : ''}`}>
            <Ico w={22} h={23}>
              <circle cx="10" cy="11.500" r="9" fill="#fff" stroke="#333" />
              <path d="M10 11L8 6M10 11L13 5" stroke="#888" />
              <path d={d} fill={c} stroke="#333" strokeWidth=".6" />
            </Ico>
            <span className="ml-auto mr-[4px] w-0 h-0 border-x-[4px] border-x-transparent border-t-[4px] border-t-black" />
          </div>
        ))}
      </Group>
    </div>
  </div>
);

const StatusBar = () => (
  <div className="h-[19px] shrink-0 flex items-center bg-[#ece9d8] text-[11px] pt-[1px]">
    <div className="w-[192px] h-[17px] pl-[4px] leading-[17px] border-r border-[#aca899] whitespace-nowrap">USB Осциллограф не подключен</div>
    <div className="flex-1 h-[17px] border-r border-[#aca899]" />
    <div className="w-[50px] pl-[4px] h-[17px] leading-[17px]">1.9</div>
  </div>
);

export default function App() {
  return (
    <div className="relative w-[1288px] h-[998px] overflow-hidden flex flex-col pl-[4px] pr-[4px] pt-[4px] bg-white [font-family:'Liberation_Sans',sans-serif] text-black">
      <TitleBar />
      <MenuRow />
      <Tabs />
      <Toolbar />
      <Scope />
      <ScrollRow />
      <Controls />
      <StatusBar />
      <div className="h-[4px] shrink-0 bg-gradient-to-b from-[#e8ecd4] to-[#a4ac7c]" />
    </div>
  );
}
